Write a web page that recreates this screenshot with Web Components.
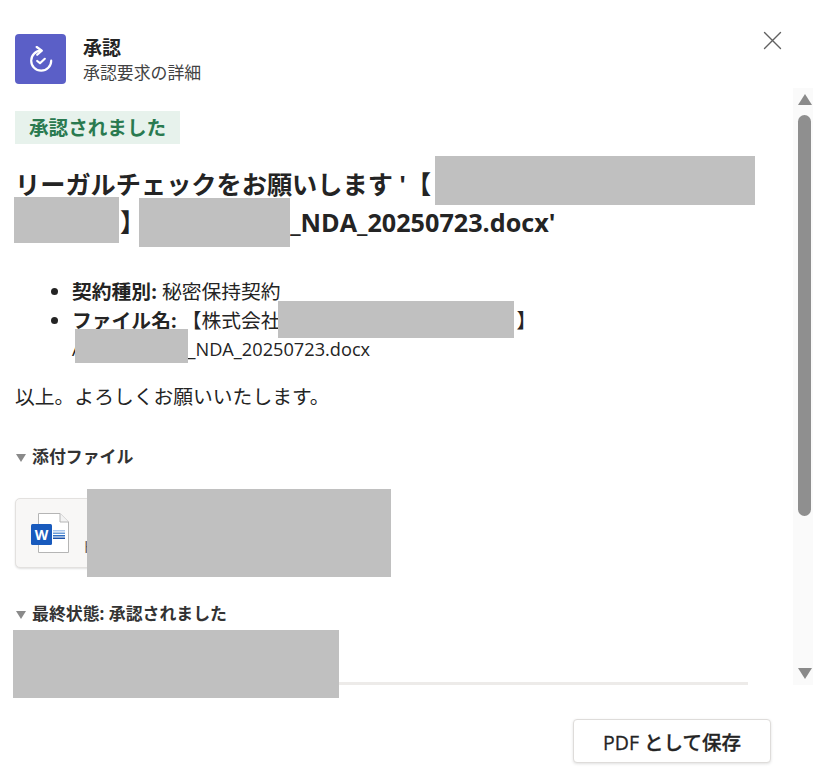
<!DOCTYPE html>
<html lang="ja">
<head>
<meta charset="utf-8">
<title>承認</title>
<style>
  html, body { margin: 0; padding: 0; background: #fff; }
  body {
    font-family: "Open Sans", "Noto Sans CJK JP", sans-serif;
    color: #242424;
    width: 830px;
    height: 775px;
    overflow: hidden;
  }
</style>
</head>
<body>

<template id="approval-header-tpl">
  <style>
    :host { display: flex; align-items: flex-start; padding: 34px 0 0 15px; height: 54px; }
    .tile { width: 51px; height: 50px; border-radius: 4px; background: #5b5fc7; display: flex; align-items: center; justify-content: center; flex: none; }
    .text { margin-left: 17px; margin-top: 1px; }
    .title { font-size: 19px; font-weight: 700; line-height: 26px; }
    .sub { font-size: 16.9px; line-height: 24px; color: #424242; }
    button { margin: -3px 0 0 auto; margin-right: 48px; width: 19px; height: 19px; border: 0; padding: 0; background: none; display: block; }
  </style>
  <div class="tile">
    <svg width="26" height="26" viewBox="0 0 26 26" fill="none" stroke="#fff" stroke-width="2.2" stroke-linecap="round" stroke-linejoin="round">
      <path d="M13.2 4.7 A10 10 0 1 0 23.2 14.7"/>
      <path d="M8.7 1 L13.8 4.7 L9.2 8.8"/>
      <path d="M9.2 15 L12 17.2 L16.8 12.8"/>
    </svg>
  </div>
  <div class="text">
    <div class="title"><slot name="title"></slot></div>
    <div class="sub"><slot name="sub"></slot></div>
  </div>
  <button aria-label="閉じる">
    <svg width="19" height="19" viewBox="0 0 19 19" stroke="#616161" stroke-width="1.4" stroke-linecap="round"><path d="M1.5 1.5 L17.5 17.5 M17.5 1.5 L1.5 17.5"/></svg>
  </button>
</template>

<template id="status-badge-tpl">
  <style>
    :host { display: inline-block; box-sizing: border-box; width: 165px; background: #e7f2ec; color: #2a7a50; font-size: 19.6px; font-weight: 700; line-height: 33px; height: 33px; padding-left: 14px; white-space: nowrap; }
  </style>
  <slot></slot>
</template>

<template id="redact-box-tpl">
  <style>
    :host { display: block; position: absolute; background: #c0c0c0; z-index: 2; }
  </style>
</template>

<template id="section-head-tpl">
  <style>
    :host { display: flex; align-items: center; font-size: 16.9px; font-weight: 700; line-height: 24px; color: #333; }
    i { width: 0; height: 0; border-left: 5.5px solid transparent; border-right: 5.5px solid transparent; border-top: 8px solid #8a8a8a; margin: 1px 6px 0 1px; flex: none; }
  </style>
  <i></i><slot></slot>
</template>

<template id="file-card-tpl">
  <style>
    :host { display: flex; align-items: center; box-sizing: border-box; width: 200px; height: 70px; background: #f8f7f6; border: 1px solid #e3e1df; border-radius: 5px; box-shadow: 0 1px 2px rgba(0,0,0,.12); padding-left: 15px; font-size: 16px; color: #616161; }
    span { margin: 28px 0 0 13px; }
  </style>
  <svg width="40" height="42" viewBox="0 0 40 42">
    <path d="M7.5 1.5 H29 L37.5 10 V40.5 H7.5 Z" fill="#fff" stroke="#b5b5b5"/>
    <path d="M29 1.5 V10 H37.5" fill="#f3f3f3" stroke="#b5b5b5"/>
    <rect x="22" y="18" width="12" height="1.5" fill="#a9c6ec"/>
    <rect x="22" y="20.5" width="12" height="1.5" fill="#6a9bd8"/>
    <rect x="22" y="23" width="12" height="1.5" fill="#2f6fc4"/>
    <rect x="22" y="25.5" width="12" height="1.5" fill="#1d52a8"/>
    <rect x="0" y="12" width="21" height="21" rx="1.5" fill="#185abd"/>
    <text x="10.5" y="27.5" text-anchor="middle" fill="#fff" font-family="'Open Sans', sans-serif" font-size="14" font-weight="700">W</text>
  </svg>
  <span><slot></slot></span>
</template>

<template id="fake-scrollbar-tpl">
  <style>
    :host { display: flex; flex-direction: column; align-items: center; flex: none; box-sizing: border-box; width: 20px; background: #fafafa; padding: 6px 0 0 3px; }
    .up, .down { width: 0; height: 0; border-left: 7.5px solid transparent; border-right: 7.5px solid transparent; flex: none; }
    .up { border-bottom: 11px solid #8a8a8a; }
    .down { border-top: 11px solid #8a8a8a; margin-top: auto; margin-bottom: 6px; }
    .thumb { width: 13px; height: 401px; margin-top: 10px; border-radius: 7px; background: #8f8f8f; flex: none; }
  </style>
  <div class="up"></div>
  <div class="thumb"></div>
  <div class="down"></div>
</template>

<template id="approval-details-tpl">
  <style>
    :host { display: flex; flex-direction: column; height: 775px; }
    .middle { display: flex; height: 597px; flex: none; }
    .scroll { flex: 1; position: relative; padding: 23px 0 0 15px; min-width: 0; }
    .bar { margin: 0 17px 0 0; }
    h1 { margin: 21px 0 0; font-size: 25.2px; font-weight: 700; line-height: 38px; color: #242424; white-space: nowrap; }
    ul { margin: 36px 0 0; padding: 0 0 0 57px; font-size: 19.8px; line-height: 29px; white-space: nowrap; }
    ul .lat { font-size: 18.2px; line-height: 1; vertical-align: 1px; }
    p { margin: 18px 0 0; font-size: 19.8px; line-height: 29px; }
    .gap { display: inline-block; }
    section-head.first { margin-top: 34px; }
    file-card { margin-top: 29px; }
    section-head.second { margin-top: 34px; }
    .rule { position: absolute; left: 14px; top: 594px; width: 734px; height: 3px; background: #edebe9; }
    footer { display: flex; justify-content: flex-end; padding: 34px 59px 0 0; }
    button { width: 198px; height: 44px; border: 1px solid #dedcda; border-radius: 4px; background: #fff; box-shadow: 0 1px 3px rgba(0,0,0,.12); font: 500 19.5px "Open Sans", "Noto Sans CJK JP", sans-serif; -webkit-text-stroke: 0.3px #242424; color: #242424; padding: 0; }
  </style>
  <approval-header>
    <span slot="title">承認</span>
    <span slot="sub">承認要求の詳細</span>
  </approval-header>
  <div class="middle">
    <div class="scroll">
      <status-badge>承認されました</status-badge>
      <h1>リーガルチェックをお願いします '【<br><span class="gap" style="width:105px"></span>】<span class="gap" style="width:145px"></span>_NDA_20250723.docx'</h1>
      <ul>
        <li><b>契約種別:</b> 秘密保持契約</li>
        <li><b>ファイル名:</b> 【株式会社<span class="gap" style="width:236px"></span>】<br><span class="lat">A</span><span class="gap" style="width:104px"></span><span class="lat">_NDA_20250723.docx</span></li>
      </ul>
      <p>以上。よろしくお願いいたします。</p>
      <section-head class="first">添付ファイル</section-head>
      <file-card>H</file-card>
      <section-head class="second">最終状態: 承認されました</section-head>
      <div class="rule"></div>
      <redact-box style="left:435px;top:68px;width:320px;height:49px"></redact-box>
      <redact-box style="left:14px;top:109px;width:105px;height:46px"></redact-box>
      <redact-box style="left:139px;top:110px;width:151px;height:49px"></redact-box>
      <redact-box style="left:278px;top:213px;width:236px;height:37px"></redact-box>
      <redact-box style="left:75px;top:241px;width:113px;height:34px"></redact-box>
      <redact-box style="left:87px;top:401px;width:304px;height:88px"></redact-box>
      <redact-box style="left:13px;top:542px;width:326px;height:68px"></redact-box>
    </div>
    <fake-scrollbar class="bar"></fake-scrollbar>
  </div>
  <footer><button>PDF として保存</button></footer>
</template>

<approval-details></approval-details>

<script>
// every element here is just: clone its template into an open shadow root
const register = (name) => {
    customElements.define(name, class extends HTMLElement {
        constructor () {
            super ();
            const tpl = document.getElementById(name + "-tpl");
            this.attachShadow({ mode: "open" }).appendChild(tpl.content.cloneNode(true));
        }
    });
};

["approval-header", "status-badge", "redact-box", "section-head", "file-card", "fake-scrollbar", "approval-details"].forEach(register);
</script>
</body>
</html>
